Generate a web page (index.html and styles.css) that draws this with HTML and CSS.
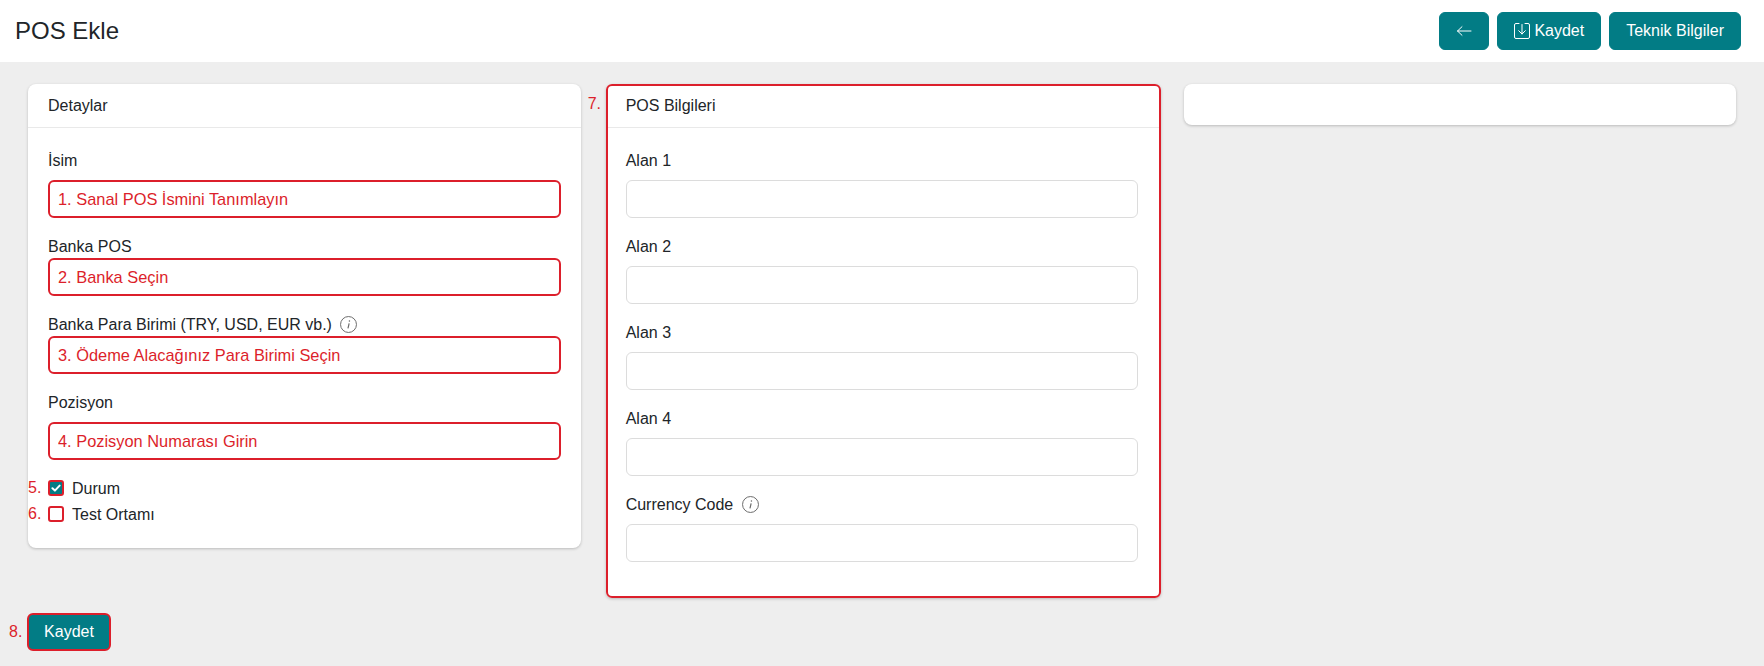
FILE: index.html
```html
<!DOCTYPE html>
<html lang="en">
<head>
  <meta charset="UTF-8" />
  <title>POS Ekle</title>
  <link rel="stylesheet" href="styles.css">
</head>
<body>

  <header class="topbar">
    <h1>POS Ekle</h1>
    <div class="actions">
      <button class="btn" aria-label="Geri">
        <svg class="icon" viewBox="0 0 16 16" fill="none" stroke="currentColor" stroke-width="1" stroke-linecap="round" stroke-linejoin="round"><path d="M15 8H1.5M6 3.7 1.5 8 6 12.3"/></svg>
      </button>
      <button class="btn btn-icon">
        <svg class="icon" viewBox="0 0 16 16" fill="none" stroke="currentColor" stroke-width="1" stroke-linecap="round" stroke-linejoin="round"><path d="M5 .5H2A1.5 1.5 0 0 0 .5 2v12A1.5 1.5 0 0 0 2 15.5h12a1.5 1.5 0 0 0 1.5-1.5V2A1.5 1.5 0 0 0 14 .5h-3M8 1.5v9.5M4.7 7.7 8 11l3.3-3.3"/></svg>
        Kaydet
      </button>
      <button class="btn">Teknik Bilgiler</button>
    </div>
  </header>

  <main class="content">
    <div class="cards">

      <section class="card">
        <h2 class="card-title">Detaylar</h2>
        <div class="card-body">
          <div class="field">
            <label>İsim</label>
            <input class="marked" type="text" value="1. Sanal POS İsmini Tanımlayın">
          </div>
          <div class="field tight">
            <label>Banka POS</label>
            <input class="marked" type="text" value="2. Banka Seçin">
          </div>
          <div class="field tight">
            <label>Banka Para Birimi (TRY, USD, EUR vb.)
              <svg class="info" viewBox="0 0 16 16" fill="none" stroke="currentColor"><circle cx="8" cy="8" r="7.5" stroke-width=".9"/><path d="M8.6 6.9 7.5 11.6" stroke-width="1.1"/><circle cx="8.9" cy="4.7" r=".7" fill="currentColor" stroke="none"/></svg>
            </label>
            <input class="marked" type="text" value="3. Ödeme Alacağınız Para Birimi Seçin">
          </div>
          <div class="field">
            <label>Pozisyon</label>
            <input class="marked" type="text" value="4. Pozisyon Numarası Girin">
          </div>
          <div class="checks">
            <div class="check">
              <span class="step step-check">5.</span>
              <span class="box checked">
                <svg viewBox="0 0 12 12" fill="none" stroke="#fff" stroke-width="2" stroke-linecap="round" stroke-linejoin="round"><path d="M2.4 6.3 4.9 8.6 9.6 3.6"/></svg>
              </span>
              <span class="check-text">Durum</span>
            </div>
            <div class="check">
              <span class="step step-check">6.</span>
              <span class="box"></span>
              <span class="check-text">Test Ortamı</span>
            </div>
          </div>
        </div>
      </section>

      <section class="card card-marked">
        <span class="step step-card">7.</span>
        <h2 class="card-title">POS Bilgileri</h2>
        <div class="card-body">
          <div class="field"><label>Alan 1</label><input type="text"></div>
          <div class="field"><label>Alan 2</label><input type="text"></div>
          <div class="field"><label>Alan 3</label><input type="text"></div>
          <div class="field"><label>Alan 4</label><input type="text"></div>
          <div class="field">
            <label>Currency Code
              <svg class="info" viewBox="0 0 16 16" fill="none" stroke="currentColor"><circle cx="8" cy="8" r="7.5" stroke-width=".9"/><path d="M8.6 6.9 7.5 11.6" stroke-width="1.1"/><circle cx="8.9" cy="4.7" r=".7" fill="currentColor" stroke="none"/></svg>
            </label>
            <input type="text">
          </div>
        </div>
      </section>

      <section class="card card-empty"></section>
    </div>

    <div class="footer-row">
      <span class="step step-save">8.</span>
      <button class="btn btn-marked">Kaydet</button>
    </div>
  </main>

</body>
</html>
```

FILE: styles.css
```css
* {
  box-sizing: border-box;
}

body {
  margin: 0;
  font-family: "Liberation Sans", Arial, sans-serif;
  font-size: 16px;
  line-height: 24px;
  color: #212529;
  background-color: #eee;
}

.topbar {
  display: flex;
  justify-content: space-between;
  align-items: center;
  height: 62px;
  padding: 0 23px 0 15px;
  background-color: #fff;
}

.topbar h1 {
  margin: 0;
  font-size: 24px;
  font-weight: 400;
}

.actions {
  display: flex;
  gap: 8px;
}

.btn {
  display: inline-flex;
  align-items: center;
  height: 38px;
  padding: 0 16px;
  border: 1px solid #027c85;
  border-radius: 6px;
  background-color: #027c85;
  color: #fff;
  font: inherit;
}

.btn-icon {
  gap: 4px;
}

.icon {
  width: 16px;
  height: 16px;
}

.content {
  padding: 22px 28px 15px;
}

.cards {
  display: grid;
  grid-template-columns: repeat(3, 1fr);
  gap: 25px;
  align-items: start;
}

.card {
  position: relative;
  border-radius: 8px;
  background-color: #fff;
  box-shadow: 0 1px 3px rgba(0, 0, 0, 0.22);
}

.card-marked {
  margin-right: -3px;
  outline: 2px solid #dc1f2b;
  outline-offset: -2px;
  border-radius: 6px;
}

.card-marked .card-body {
  padding-right: 23px;
}

.card-empty {
  height: 41px;
  margin-left: 1px;
}

.card-title {
  margin: 0;
  height: 44px;
  padding: 10px 20px;
  border-bottom: 1px solid #e9e9e9;
  font-size: 16px;
  font-weight: 400;
}

.card-body {
  padding: 20px 20px 20px;
}

.field {
  margin-bottom: 16px;
}

.field label {
  display: block;
  margin-bottom: 7px;
  padding-top: 1px;
}

.field.tight label {
  margin-bottom: -1px;
}

.field input {
  display: block;
  width: 100%;
  height: 38px;
  padding: 0 8px;
  border: 1px solid #dcdcdc;
  border-radius: 6px;
  background-color: #fff;
  color: #212529;
  font: inherit;
}

.field input.marked {
  padding-top: 1px;
  border: 2px solid #dc1f2b;
  color: #dc1f2b;
  font-size: 16.4px;
}

.info {
  width: 17px;
  height: 17px;
  margin-left: 4px;
  vertical-align: -3px;
  color: #666;
}

.checks {
  display: flex;
  flex-direction: column;
  gap: 2px;
  margin-bottom: 2px;
}

.check {
  position: relative;
  display: flex;
  align-items: center;
  gap: 8px;
  height: 24px;
}

.check-text {
  padding-top: 1px;
}

.box {
  display: flex;
  width: 16px;
  height: 16px;
  border: 2px solid #dc1f2b;
  border-radius: 3px;
  background-color: #fff;
}

.box.checked {
  background-color: #027c85;
}

.step {
  position: absolute;
  color: #dc1f2b;
}

.step-check {
  left: -20px;
  top: 0;
}

.step-card {
  left: -18px;
  top: 8px;
}

.step-save {
  left: -19px;
  top: 7px;
}

.footer-row {
  position: relative;
  margin-top: 15px;
}

.btn-marked {
  margin-left: -1px;
  border: 2px solid #dc1f2b;
  width: 84px;
  justify-content: center;
}
```
